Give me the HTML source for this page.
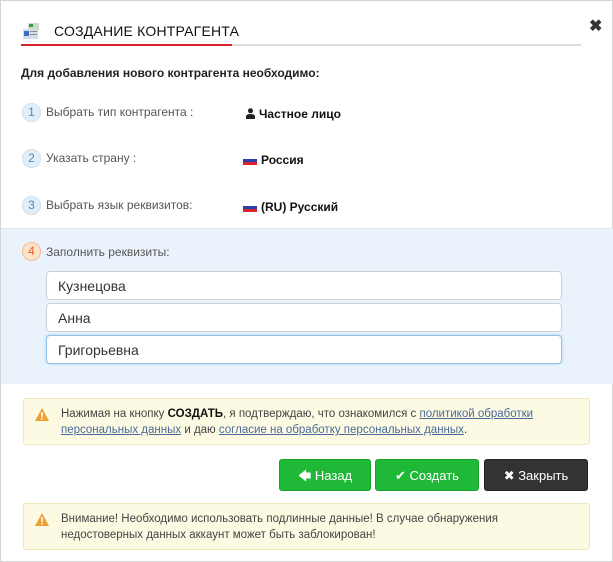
<!DOCTYPE html>
<html><head><meta charset="utf-8"><style>
*{box-sizing:border-box;margin:0;padding:0}
body{width:613px;height:562px;background:#fff;font-family:"Liberation Sans",Arial,sans-serif;position:relative;overflow:hidden;border:1px solid #d4d4d4;color:#222}
.abs{position:absolute}
.title{left:53px;top:22px;font-size:14px;color:#111;letter-spacing:0.2px}
.line{left:20px;top:43px;width:560px;height:2px;background:#ddd}
.line i{position:absolute;left:0;top:0;width:211px;height:2px;background:#d9232d}
.close{left:588px;top:15px;font-size:16px;font-weight:bold;color:#333}
.intro{left:20px;top:65px;font-size:12px;font-weight:bold}
.num{width:19px;height:19px;border-radius:50%;background:#e2eef8;border:1px solid #cfe0ee;color:#4a8cc4;font-size:12px;text-align:center;line-height:17px}
.lbl{font-size:12px;color:#555}
.val{font-size:12px;font-weight:bold;color:#111}
.flag{display:inline-block;width:14px;height:9px;vertical-align:-1px;margin-right:4px;background:linear-gradient(#fff 0 33%,#2a3fb0 33% 66%,#d8232a 66%)}
.blue{left:0;top:227px;width:613px;height:156px;background:#eaf3fb;border-top:1px solid #dbe6ef}
.inp{left:45px;width:516px;height:29px;background:#fff;border:1px solid #cfcfcf;border-radius:4px;font-size:14px;color:#333;padding:6px 11px}
.warn{left:22px;width:567px;height:47px;background:#fcfae3;border:1px solid #efe8bd;border-radius:3px;font-size:11.5px;color:#444;line-height:16px;padding:7px 10px 0 37px}
.warn a{color:#4a6a9a;text-decoration:underline}
.tri{position:absolute;left:11px;top:9px}
.btn{top:458px;height:32px;border-radius:3px;color:#fff;font-size:13px;text-align:center;line-height:32px}
.g{background:#1fb837;border:1px solid #17a02d}
.d{background:#333;border:1px solid #222}
</style></head><body>
<svg class="abs" style="left:21px;top:21px" width="18" height="18" viewBox="0 0 18 18"><rect x="6" y="1" width="11" height="8" fill="#cfd8cf"/><rect x="7" y="2" width="4" height="3" fill="#3c9b3c"/><rect x="1" y="7" width="15" height="10" fill="#d6dee8"/><rect x="2" y="9" width="5" height="5" fill="#3a6fc0"/><rect x="8" y="9" width="7" height="1" fill="#889"/><rect x="8" y="12" width="7" height="1" fill="#889"/></svg>
<div class="abs title">СОЗДАНИЕ КОНТРАГЕНТА</div>
<div class="abs line"><i></i></div>
<div class="abs close">✖</div>
<div class="abs intro">Для добавления нового контрагента необходимо:</div>

<div class="abs num" style="left:21px;top:102px">1</div>
<div class="abs lbl" style="left:45px;top:104px">Выбрать тип контрагента :</div>
<div class="abs val" style="left:245px;top:106px"><svg width="9" height="11" viewBox="0 0 9 11" style="vertical-align:-1px;margin-right:4px"><circle cx="4.5" cy="2.8" r="2.5" fill="#222"/><path d="M0 11V8.5Q0 6 4.5 6Q9 6 9 8.5V11Z" fill="#222"/></svg>Частное лицо</div>

<div class="abs num" style="left:21px;top:148px">2</div>
<div class="abs lbl" style="left:45px;top:150px">Указать страну :</div>
<div class="abs val" style="left:242px;top:152px"><span class="flag"></span>Россия</div>

<div class="abs num" style="left:21px;top:195px">3</div>
<div class="abs lbl" style="left:45px;top:197px">Выбрать язык реквизитов:</div>
<div class="abs val" style="left:242px;top:199px"><span class="flag"></span>(RU) Русский</div>

<div class="abs blue"></div>
<div class="abs num" style="left:21px;top:241px;background:#fde3c8;border-color:#f2b98a;color:#e0602a">4</div>
<div class="abs lbl" style="left:45px;top:244px">Заполнить реквизиты:</div>
<div class="abs inp" style="top:270px">Кузнецова</div>
<div class="abs inp" style="top:302px">Анна</div>
<div class="abs inp" style="top:334px;border-color:#8ec0ea;box-shadow:0 0 3px #a8d0f0">Григорьевна</div>

<div class="abs warn" style="top:397px"><svg class="tri" width="14" height="13" viewBox="0 0 14 13"><path d="M7 0L14 13H0Z" fill="#f0a030"/><rect x="6.2" y="4" width="1.6" height="5" fill="#fff"/><rect x="6.2" y="10" width="1.6" height="1.5" fill="#fff"/></svg>Нажимая на кнопку <b style="color:#111">СОЗДАТЬ</b>, я подтверждаю, что ознакомился с <a>политикой обработки персональных данных</a> и даю <a>согласие на обработку персональных данных</a>.</div>

<div class="abs btn g" style="left:278px;width:92px">🡄 Назад</div>
<div class="abs btn g" style="left:374px;width:104px">✔ Создать</div>
<div class="abs btn d" style="left:483px;width:104px">✖ Закрыть</div>

<div class="abs warn" style="top:502px"><svg class="tri" width="14" height="13" viewBox="0 0 14 13"><path d="M7 0L14 13H0Z" fill="#f0a030"/><rect x="6.2" y="4" width="1.6" height="5" fill="#fff"/><rect x="6.2" y="10" width="1.6" height="1.5" fill="#fff"/></svg>Внимание! Необходимо использовать подлинные данные! В случае обнаружения недостоверных данных аккаунт может быть заблокирован!</div>
</body></html>
